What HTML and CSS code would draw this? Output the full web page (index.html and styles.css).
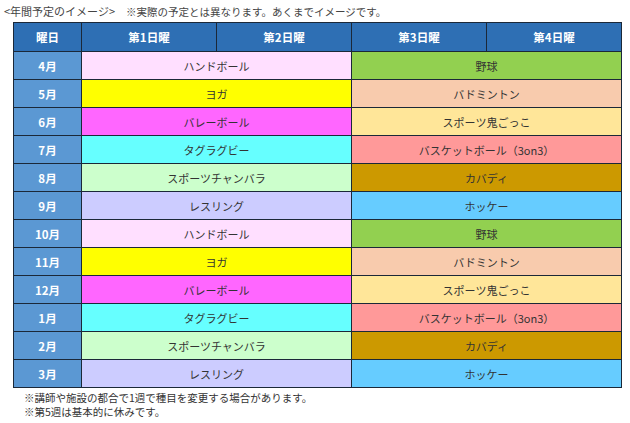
FILE: index.html
```html
<!DOCTYPE html>
<html lang="ja">
<head>
<meta charset="utf-8">
<link rel="stylesheet" href="styles.css">
</head>
<body>
<p class="title"><span class="lead">&lt;年間予定のイメージ&gt;</span>※実際の予定とは異なります。あくまでイメージです。</p>
<table class="sched">
<colgroup><col class="c-m"><col class="c-w"><col class="c-w"><col class="c-w"><col class="c-w"></colgroup>
<thead>
<tr><th>曜日</th><th>第1日曜</th><th>第2日曜</th><th>第3日曜</th><th>第4日曜</th></tr>
</thead>
<tbody>
<tr><th>4月</th><td colspan="2" class="a1">ハンドボール</td><td colspan="2" class="b1">野球</td></tr>
<tr><th>5月</th><td colspan="2" class="a2">ヨガ</td><td colspan="2" class="b2">バドミントン</td></tr>
<tr><th>6月</th><td colspan="2" class="a3">バレーボール</td><td colspan="2" class="b3">スポーツ鬼ごっこ</td></tr>
<tr><th>7月</th><td colspan="2" class="a4">タグラグビー</td><td colspan="2" class="b4">バスケットボール（3on3）</td></tr>
<tr><th>8月</th><td colspan="2" class="a5">スポーツチャンバラ</td><td colspan="2" class="b5">カバディ</td></tr>
<tr><th>9月</th><td colspan="2" class="a6">レスリング</td><td colspan="2" class="b6">ホッケー</td></tr>
<tr><th>10月</th><td colspan="2" class="a1">ハンドボール</td><td colspan="2" class="b1">野球</td></tr>
<tr><th>11月</th><td colspan="2" class="a2">ヨガ</td><td colspan="2" class="b2">バドミントン</td></tr>
<tr><th>12月</th><td colspan="2" class="a3">バレーボール</td><td colspan="2" class="b3">スポーツ鬼ごっこ</td></tr>
<tr><th>1月</th><td colspan="2" class="a4">タグラグビー</td><td colspan="2" class="b4">バスケットボール（3on3）</td></tr>
<tr><th>2月</th><td colspan="2" class="a5">スポーツチャンバラ</td><td colspan="2" class="b5">カバディ</td></tr>
<tr><th>3月</th><td colspan="2" class="a6">レスリング</td><td colspan="2" class="b6">ホッケー</td></tr>
</tbody>
</table>
<div class="notes">
<p>※講師や施設の都合で1週で種目を変更する場合があります。</p>
<p>※第5週は基本的に休みです。</p>
</div>
</body>
</html>
```

FILE: styles.css
```css
html, body {
  margin: 0;
  padding: 0;
  background: #ffffff;
}
body {
  font-family: "Noto Sans CJK JP", "Noto Sans", sans-serif;
  color: #333333;
  padding: 4px 0 0 4px;
}
.title {
  margin: 0;
  font-size: 10.5px;
  line-height: 14px;
  height: 18px;
  color: #444444;
}
.lead {
  display: inline-block;
  font-size: 11px;
  margin-right: 11px;
}
.sched {
  margin-left: 9px;
  border-collapse: collapse;
  table-layout: fixed;
  width: 608px;
  font-size: 11px;
}
.c-m { width: 68px; }
.c-w { width: 135px; }
.sched th, .sched td {
  border: 1px solid #1b2838;
  text-align: center;
  padding: 0;
  line-height: 14px;
}
.sched thead th {
  background: #2e6fb4;
  color: #ffffff;
  font-weight: bold;
  font-size: 11.5px;
  height: 28px;
}
.sched tbody th {
  background: #5b98d3;
  color: #ffffff;
  font-weight: bold;
  font-size: 11.5px;
  height: 27px;
}
.sched td {
  color: #333333;
}
.a1 { background: #ffdfff; }
.a2 { background: #ffff00; }
.a3 { background: #ff66ff; }
.a4 { background: #66ffff; }
.a5 { background: #ccffcc; }
.a6 { background: #ccccff; }
.b1 { background: #92d050; }
.b2 { background: #f8cbad; }
.b3 { background: #ffe699; }
.b4 { background: #ff9999; }
.b5 { background: #cc9900; }
.b6 { background: #66ccff; }
.notes {
  margin: 3px 0 0 20px;
  font-size: 10.5px;
  line-height: 14px;
  color: #333333;
}
.notes p { margin: 0; }
```
